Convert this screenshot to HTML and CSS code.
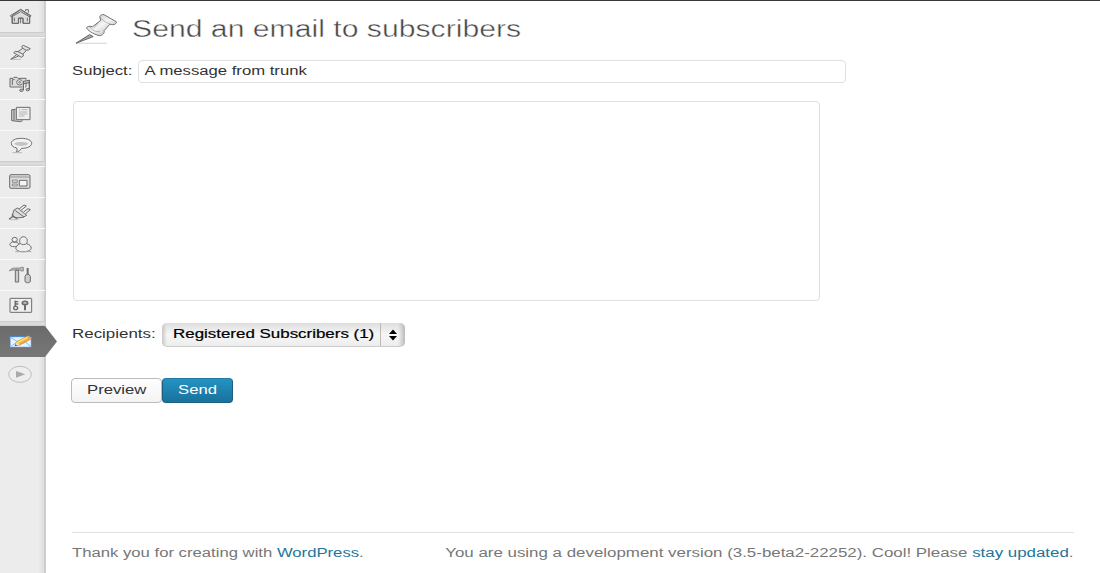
FILE: index.html
```html
<!DOCTYPE html>
<html lang="en">
<head>
  <meta charset="utf-8">
  <title>Send an email to subscribers</title>
  <link rel="stylesheet" href="styles.css">
</head>
<body>
  <div class="admin-bar"></div>
  <div class="wrap">
    <nav class="menu">
      <a class="menu-item first">
        <svg viewBox="0 0 135 93"><path d="M36 44v23h20V52h13v15h20V44L62 26z" fill="#ddd"/><path d="M31 44l31-19 31 19-3 4-28-16-28 16zM37 47v20h18V51h14v16h20V47M43 50v11M82 50v11M62 51v16M77 30v-4h8v9"/></svg>
      </a>
      <div class="separator"></div>
      <a class="menu-item">
        <svg viewBox="0 0 135 93"><path d="M65 28l5-3 21 10-5 4h-6L69 51l1 6-6 4-23-14 5-4 8 1 14-10z" fill="#e2e2e2"/><path d="M50 53L32 67l24-10M68 34l11 6M54 44l14 7"/><path d="M36 67h27" stroke="#bbb"/></svg>
      </a>
      <a class="menu-item">
        <svg viewBox="0 0 135 93"><path d="M30 31h9l3-3h9l3 3h24v26H30z" fill="#ddd"/><ellipse cx="59" cy="43" rx="9" ry="8" fill="#eee"/><ellipse cx="59" cy="43" rx="3" ry="2"/><path d="M37 35h7M37 35v16"/><path d="M71 65V40h17v25" stroke="#eee" stroke-width="9"/><path d="M70 67V40l18-3v29M70 47l18-3" stroke-width="4"/><ellipse cx="64" cy="67" rx="5" ry="3.500" fill="#bbb"/><ellipse cx="83" cy="65" rx="5" ry="3.500" fill="#bbb"/></svg>
      </a>
      <a class="menu-item">
        <svg viewBox="0 0 135 93"><path d="M47 31l-12 1v33l27 3 6-3" fill="#ccc"/><path d="M42 31v34" stroke-width="3"/><path d="M49 25h41v37H49z" fill="#eee"/><path d="M57 32h4M66 32h17M57 39h25M57 45h25M57 51h16" stroke="#999" stroke-width="2"/></svg>
      </a>
      <a class="menu-item">
        <svg viewBox="0 0 135 93"><path d="M64 25c18 0 31 6 31 15s-13 15-30 15c-3 5-9 10-18 12 5-4 5-9 3-13-10-2-16-7-16-14 0-9 12-15 30-15z" fill="#f2f2f2"/><path d="M43 42c8 8 34 8 42 0 0-8-42-8-42 0z" fill="#c4c4c4" stroke="none"/><path d="M37 68h29" stroke="#bbb"/></svg>
      </a>
      <div class="separator"></div>
      <a class="menu-item">
        <svg viewBox="0 0 135 93"><rect x="29" y="26" width="61" height="41" rx="4" fill="#ddd" stroke-width="3"/><path d="M31 33h57" stroke-width="2"/><path d="M58 43h23v17H58z" fill="#f5f5f5" stroke-width="3"/><path d="M37 42h15v7H37zM37 54h15v6H37z" stroke-width="2"/></svg>
      </a>
      <a class="menu-item">
        <svg viewBox="0 0 135 93"><path d="M42 39l11-6 27 22-11 6-20 2-12-8z" fill="#ddd"/><path d="M27 67l12-9M38 50c-3 7 5 14 14 13" stroke-width="4"/><path d="M57 36l15-12 7 3-16 13M70 46l14-11 7 3-15 13M46 41l26 19" fill="#eee"/><path d="M30 68h25" stroke="#bbb"/></svg>
      </a>
      <a class="menu-item">
        <svg viewBox="0 0 135 93"><ellipse cx="44" cy="35" rx="8" ry="7" fill="#eee"/><path d="M37 42c-12 5-10 14 6 14 12 0 17-7 9-13z" fill="#eee"/><path d="M60 47c-2-8-2-20 10-21 13 1 13 13 10 21 19 6 20 23-8 24-29 1-31-15-12-24z" fill="#eee"/><path d="M61 46c3 5 16 5 19 0"/><path d="M46 71h48" stroke="#aaa"/></svg>
      </a>
      <a class="menu-item">
        <svg viewBox="0 0 135 93"><path d="M28 36c5-7 10-10 19-9h13l4-2h6v11h-6l-4-3H47c-8 0-13 0-19 3z" fill="#bbb" stroke-width="2"/><path d="M46 34h10v35H46z" fill="#ccc" stroke-width="3"/><path d="M83 27v19" stroke-width="6"/><path d="M79 46h8l4 6v16l-5 3h-6l-5-3V52z" fill="#ccc" stroke-width="3"/></svg>
      </a>
      <a class="menu-item">
        <svg viewBox="0 0 135 93"><rect x="30" y="25" width="65" height="42" rx="1" fill="#eee" stroke-width="3"/><path d="M46 32v18" stroke-width="5"/><path d="M46 35h9M46 42h9" stroke-width="4"/><ellipse cx="47" cy="54" rx="6" ry="5" stroke-width="4"/><ellipse cx="75" cy="39" rx="8" ry="5" stroke-width="5"/><path d="M75 41v20" stroke-width="6"/></svg>
      </a>
      <div class="separator"></div>
      <a class="menu-item current">
        <svg viewBox="0 0 135 93"><rect x="30" y="32" width="64" height="32" rx="2" fill="#e9f4ff" stroke="#4485d8" stroke-width="3"/><path d="M32 62l20-15M93 62L75 47M32 34l28 18h8l25-18" stroke="#8dbceb"/><path d="M45 59l5-12 35-18 9 9-35 19z" fill="#f4b735" stroke="#b87918" stroke-width="2"/><path d="M53 49l33-17" stroke="#ffe48a" stroke-width="4"/><path d="M50 47l9 9-14 4z" fill="#f4dcb4" stroke="none"/><path d="M45 60l2-5 4 4z" fill="#333" stroke="none"/><path d="M80 32l5-3 9 9-5 3z" fill="#e9a36b" stroke="none"/></svg>
      </a>
      <a class="menu-item collapse">
        <svg viewBox="0 0 135 93"><ellipse cx="60" cy="52" rx="34" ry="24" fill="#eee" stroke="#bdbdbd" stroke-width="3"/><path d="M48 42l28 10-28 10z" fill="#aaa" stroke="none"/></svg>
      </a>
    </nav>

    <main class="content">
      <header class="page-title">
        <svg class="pin" viewBox="0 0 130 96">
          <defs><linearGradient id="metal" x1="0" y1="0" x2="1" y2="1"><stop offset="0" stop-color="#bbb"/><stop offset=".5" stop-color="#f4f4f4"/><stop offset="1" stop-color="#aaa"/></linearGradient></defs>
          <path d="M4 91h92" stroke="#bbb" stroke-width="2"/>
          <path d="M44 65L3 91l52-20z" fill="#aaa" stroke="#666" stroke-width="3"/>
          <path d="M75 11c1-5 8-8 13-6l37 21c2 3-5 10-11 9l-9-1-17 19c2 7-5 15-13 15-14-2-33-13-40-22 0-5 8-8 18-5l25-19z" fill="url(#metal)" stroke="#707070" stroke-width="3"/>
          <path d="M75 11c5 10 26 22 39 24M46 42c4 9 18 16 29 13M78 20L58 44" fill="none" stroke="#999" stroke-width="2"/>
        </svg>
        <h1><span class="wide">Send an email to subscribers</span></h1>
      </header>

      <form>
        <div class="row subject">
          <label for="subject"><span class="wide">Subject:</span></label>
          <div class="field"><input class="wide" id="subject" type="text" value="A message from trunk"></div>
        </div>
        <textarea class="message"></textarea>
        <div class="row recipients">
          <label><span class="wide">Recipients:</span></label>
          <div class="select">
            <div class="value"><span class="wide">Registered Subscribers (1)</span></div>
            <div class="arrows"><svg viewBox="0 0 8 11"><path d="M0 4.500L4 0l4 4.500zM0 6.500h8L4 11z"/></svg></div>
          </div>
        </div>
        <div class="actions">
          <button class="button" type="button"><span class="wide">Preview</span></button>
          <button class="button primary" type="button"><span class="wide">Send</span></button>
        </div>
      </form>

      <footer class="footer">
        <p class="wide">Thank you for creating with <a>WordPress</a>.</p>
        <p class="wide right">You are using a development version (3.5-beta2-22252). Cool! Please <a>stay updated</a>.</p>
      </footer>
    </main>
  </div>
</body>
</html>
```

FILE: styles.css
```css
* {
  box-sizing: border-box;
  margin: 0;
  padding: 0;
}

body {
  height: 573px;
  overflow: hidden;
  background: #fff;
  color: #333;
  font: 12px/16px "Liberation Sans", Arial, sans-serif;
}

/* extended lettering */
.wide {
  display: inline-block;
  white-space: nowrap;
  transform: scaleX(1.39);
  transform-origin: 0 50%;
}

.admin-bar {
  height: 1px;
  background: #3a373a;
}

.wrap {
  display: flex;
  height: 572px;
}

.menu {
  width: 46px;
  flex: none;
  background: linear-gradient(to right, #ececec 38px, #dedede 44px, #bcbcbc 45px, #ddd 46px);
}

.menu-item {
  display: block;
  width: 45px;
  height: 31px;
  border-top: 1px solid #f9f9f9;
}

.menu-item.first,
.menu-item.current,
.menu-item.collapse {
  border-top: 0;
}

.menu-item svg {
  display: block;
  width: 45px;
  height: 31px;
  margin-top: -1px;
  fill: none;
  stroke: #6c6c6c;
  stroke-width: 3;
  stroke-linejoin: round;
}

.menu-item.first svg,
.menu-item.current svg,
.menu-item.collapse svg {
  margin-top: 0;
}

.separator {
  width: 45px;
  height: 5px;
  background: #dadada;
  border-top: 1px solid #ccc;
  border-bottom: 1px solid #cfcfcf;
}

.menu-item.current {
  width: 57px;
  background: linear-gradient(#6b6b6b, #777);
  clip-path: polygon(0 0, 45px 0, 100% 50%, 45px 100%, 0 100%);
}

.content {
  flex: 1;
  display: flex;
  flex-direction: column;
  padding: 12px 26px 0;
}

.page-title {
  display: flex;
  align-items: flex-start;
  height: 47px;
}

.pin {
  width: 43px;
  height: 32px;
  margin-left: 3px;
}

h1 {
  margin: 2px 0 0 14px;
  font-size: 23px;
  font-weight: 400;
  line-height: 28px;
  color: #464646;
  -webkit-text-stroke: 0.4px #fff;
}

h1 .wide {
  transform: scaleX(1.312);
}

.row {
  display: flex;
}

.subject label {
  width: 66px;
  padding-top: 3px;
}

.field {
  width: 708px;
  height: 23px;
  border: 1px solid #dfdfdf;
  border-radius: 4px;
}

.field input {
  width: 500px;
  height: 20px;
  padding-left: 4px;
  border: 0;
  outline: 0;
  background: none;
  font: inherit;
  color: #333;
}

.message {
  display: block;
  width: 747px;
  height: 200px;
  margin: 18px 0 22px 1px;
  border: 1px solid #dfdfdf;
  border-radius: 4px;
  resize: none;
}

.recipients label {
  width: 90px;
  padding-top: 3px;
}

.recipients .wide {
  transform: scaleX(1.41);
}

.select {
  display: flex;
  width: 243px;
  height: 24px;
  border-radius: 5px;
  border-bottom: 1px solid #ccc;
  background: linear-gradient(to right, #c8c8c8, transparent 5px, transparent 236px, #bbb), linear-gradient(#dedede, #f6f6f6 50%, #ededed);
  color: #000;
}

.value {
  width: 219px;
  padding: 3px 0 0 11px;
  border-right: 1px solid #bbb;
  -webkit-text-stroke: 0.2px #000;
}

.arrows {
  padding: 6px 0 0 8px;
}

.arrows svg {
  display: block;
  width: 8px;
  height: 12px;
}

.actions {
  display: flex;
  margin: 31px 0 0 -1px;
}

.button {
  width: 91px;
  height: 25px;
  padding: 0 0 2px 15px;
  border: 1px solid #bbb;
  border-radius: 4px;
  background: linear-gradient(#fefefe, #f4f4f4);
  font: inherit;
  text-align: left;
  color: #333;
}

.button.primary {
  width: 71px;
  border-color: #1b607f;
  border-top-color: #2179a5;
  background: linear-gradient(#2393c2, #1a719c);
  color: #fff;
}

.footer {
  display: flex;
  justify-content: space-between;
  width: 1002px;
  margin-top: auto;
  height: 41px;
  padding-top: 12px;
  border-top: 1px solid #dfdfdf;
  color: #777;
}

.footer a {
  color: #21759b;
}

.footer .right {
  transform: scaleX(1.407);
  transform-origin: 100% 50%;
}
```
